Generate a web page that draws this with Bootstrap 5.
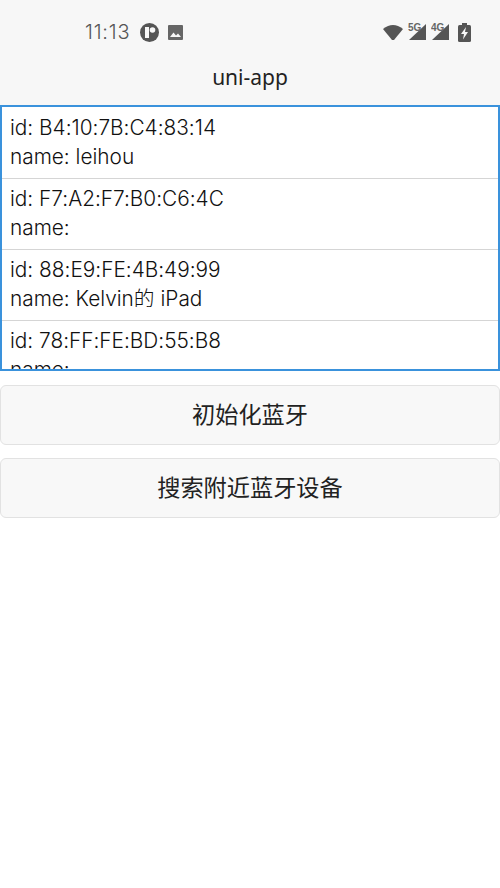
<!DOCTYPE html>
<html lang="en">
<head>
  <meta charset="UTF-8" />
  <meta name="viewport" content="width=device-width, initial-scale=1.0"/>
  <title>uni-app</title>
  <link href="https://cdn.jsdelivr.net/npm/bootstrap@5.3.3/dist/css/bootstrap.min.css" rel="stylesheet">
  <style>
    body {
      background-color: #fff;
      color: #222;
      font-family: "Inter", "Noto Sans CJK SC", sans-serif;
      font-feature-settings: "calt" 0;
      height: 888px;
      overflow: hidden;
    }

    .top-area {
      background-color: #f7f7f7;
      height: 105px;
    }

    .status-bar {
      height: 56px;
      padding: 8px 29px 0 85px;
      color: #555;
    }

    .clock {
      font-size: 20px;
      font-weight: 300;
      letter-spacing: .8px;
      color: #555;
      margin-right: 10px;
      line-height: 1;
    }

    .app-glyph {
      margin-right: 9px;
    }

    .page-title {
      font-family: "Noto Sans", sans-serif;
      font-size: 21px;
      line-height: 1;
      color: #222;
      margin-top: 11px;
    }

    .device-box {
      height: 266px;
      padding-top: 1px;
      border: 2px solid #3a92dc;
      overflow: hidden;
    }

    .device-row {
      height: 71px;
      padding: 5px 8px;
      border-bottom: 1px solid #d5d5d5;
      font-size: 20.8px;
      font-weight: 300;
      line-height: 29px;
      color: #111;
    }

    .action-list {
      margin-top: 14px;
      gap: 13px;
    }

    .action-btn {
      display: block;
      width: 100%;
      height: 60px;
      background-color: #f8f8f8;
      border: 1px solid #e2e2e2;
      border-radius: 6px;
      font-size: 23.2px;
      color: #222;
    }
  </style>
</head>
<body>

<!-- Status bar + title -->
<div class="top-area">
  <div class="status-bar d-flex align-items-center">
    <span class="clock">11:13</span>
    <svg width="19" height="19" viewBox="0 0 19 19" class="app-glyph">
      <circle cx="9.5" cy="9.5" r="9.5" fill="#555"/>
      <rect x="5" y="4" width="4" height="11" fill="#f7f7f7"/>
      <circle cx="12.5" cy="7" r="2.8" fill="#f7f7f7"/>
    </svg>
    <svg width="15" height="15" viewBox="0 0 15 15">
      <rect width="15" height="15" rx="1" fill="#666"/>
      <path d="M2 12 5.5 7.5 8 10.5 10 8.5 13 12Z" fill="#f7f7f7"/>
    </svg>
    <div class="ms-auto d-flex align-items-center gap-1">
      <svg width="21" height="17" viewBox="0 0 21 17">
        <path d="M0 5Q10-3 20 5L11 16H9Z" fill="#555"/>
      </svg>
      <svg width="19" height="18" viewBox="0 0 19 18">
        <path d="M18 1V17H1Z" fill="#555"/>
        <text x="0" y="8" font-size="10" font-weight="700" font-family="Liberation Sans" fill="#666">5G</text>
      </svg>
      <svg width="19" height="18" viewBox="0 0 19 18" class="me-1">
        <path d="M18 1V17H1Z" fill="#555"/>
        <text x="0" y="8" font-size="10" font-weight="700" font-family="Liberation Sans" fill="#666">4G</text>
      </svg>
      <svg width="13" height="19" viewBox="0 0 13 19">
        <rect x="4" y="0" width="5" height="2" fill="#555"/>
        <rect y="2" width="13" height="17" rx="1.5" fill="#555"/>
        <path d="M8 4 3 11H6L5 16.5 10 9H7Z" fill="#f7f7f7"/>
      </svg>
    </div>
  </div>
  <div class="page-title text-center">uni-app</div>
</div>

<!-- Device list -->
<div class="device-box">
  <div class="device-row">id: B4:10:7B:C4:83:14<br>name: leihou</div>
  <div class="device-row">id: F7:A2:F7:B0:C6:4C<br>name:</div>
  <div class="device-row">id: 88:E9:FE:4B:49:99<br>name: Kelvin的 iPad</div>
  <div class="device-row">id: 78:FF:FE:BD:55:B8<br>name:</div>
</div>

<!-- Actions -->
<div class="d-flex flex-column action-list">
  <button class="btn action-btn" type="button">初始化蓝牙</button>
  <button class="btn action-btn" type="button">搜索附近蓝牙设备</button>
</div>

<script src="https://cdn.jsdelivr.net/npm/bootstrap@5.3.3/dist/js/bootstrap.bundle.min.js"></script>
</body>
</html>
